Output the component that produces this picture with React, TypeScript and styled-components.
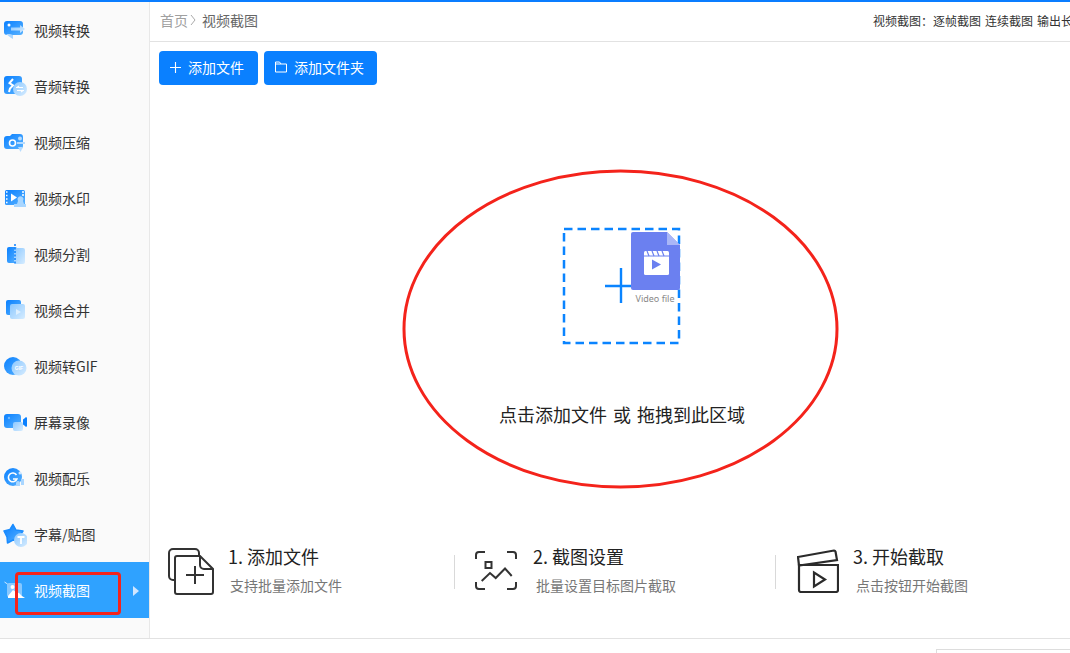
import React from "react";
import styled, { createGlobalStyle } from "styled-components";

const Global = createGlobalStyle`
  html, body { margin: 0; padding: 0; width: 1070px; height: 653px; overflow: hidden; background: #fff; }
  body { font-family: "Noto Sans CJK SC", "Liberation Sans", sans-serif; }
  * { box-sizing: border-box; }
`;

const Page = styled.div`
  position: relative;
  width: 1094px;
  height: 653px;
  display: flex;
  flex-direction: column;
  border-top: 2px solid #0a7dff;
`;
const Body = styled.div`
  display: flex;
  height: 637px;
  border-bottom: 1px solid #e2e2e2;
`;
const Sidebar = styled.nav`
  width: 150px;
  flex: none;
  background: #fafafa;
  border-right: 1px solid #e8e8e8;
`;
const NavItem = styled.div<{ $active?: boolean }>`
  height: 56px;
  padding-top: 2px;
  width: 149px;
  display: flex;
  align-items: center;
  gap: 7px;
  padding-left: 3px;
  font-size: 14px;
  color: ${p => (p.$active ? "#fff" : "#333")};
  background: ${p => (p.$active ? "#2fa2ff" : "transparent")};
`;
const NavLabel = styled.span`
  margin-bottom: 2px;
`;
const NavArrow = styled.span`
  margin-left: auto;
  margin-right: 10px;
  width: 0;
  height: 0;
  border-left: 6px solid #cfe6ff;
  border-top: 5px solid transparent;
  border-bottom: 5px solid transparent;
`;
const Main = styled.main`
  flex: 1;
  display: flex;
  flex-direction: column;
  min-width: 0;
`;
const Header = styled.header`
  height: 40px;
  flex: none;
  border-bottom: 1px solid #e2e2e2;
  display: flex;
  align-items: center;
  justify-content: space-between;
  padding: 0 9px 3px 10px;
`;
const Crumbs = styled.div`
  display: flex;
  align-items: center;
  font-size: 14px;
  color: #666;
`;
const CrumbHome = styled.span`
  color: #a0a0a0;
`;
const Chevron = styled.svg`
  width: 6px;
  height: 12px;
  margin: 0 6px 0 2px;
`;
const Links = styled.div`
  font-size: 12px;
  color: #333;
  white-space: nowrap;
  word-spacing: 1.3px;
`;
const Toolbar = styled.div`
  flex: none;
  display: flex;
  gap: 6px;
  padding: 9px 0 0 9px;
`;
const Button = styled.button<{ $w: number }>`
  width: ${p => p.$w}px;
  height: 34px;
  border: 0;
  border-radius: 4px;
  background: #0a80ff;
  color: #fff;
  font: inherit;
  font-size: 14px;
  display: flex;
  align-items: center;
  gap: 7px;
  padding: 0 0 2px 11px;
`;
const DropArea = styled.section`
  flex: 1;
  display: flex;
  flex-direction: column;
  align-items: center;
  padding-top: 142px;
`;
const DropGraphic = styled.svg`
  width: 120px;
  height: 118px;
  display: block;
`;
const DropText = styled.div`
  margin-top: 56px;
  font-size: 18px;
  line-height: 26px;
  color: #222;
  word-spacing: 2px;
`;
const Steps = styled.section`
  flex: none;
  height: 93px;
  display: flex;
  padding-left: 18px;
`;
const Step = styled.div<{ $w: number; $gap: number; $pad?: number }>`
  width: ${p => p.$w}px;
  padding-left: ${p => p.$pad ?? 0}px;
  display: flex;
  align-items: flex-start;
  gap: ${p => p.$gap}px;
`;
const StepText = styled.div<{ $indent: number }>`
  display: flex;
  flex-direction: column;
  > span:last-child { margin-left: ${p => p.$indent}px; }
`;
const StepTitle = styled.span`
  margin-top: -1px;
  font-size: 18px;
  line-height: 24px;
  color: #222;
`;
const StepSub = styled.span`
  margin-top: 7px;
  font-size: 14px;
  line-height: 20px;
  color: #777;
`;
const StepIcon = styled.svg`
  flex: none;
  margin-top: 3px;
`;
const Divider = styled.div`
  flex: none;
  width: 1px;
  height: 34px;
  margin-top: 10px;
  background: #d9d9d9;
`;
const Footer = styled.footer`
  flex: 1;
  display: flex;
  justify-content: flex-end;
  align-items: flex-end;
`;
const FooterBox = styled.div`
  width: 158px;
  height: 4px;
  border: 1px solid #ddd;
  border-bottom: 0;
`;
const EllipseMark = styled.svg`
  position: absolute;
  left: 402px;
  top: 167px;
  width: 437px;
  height: 320px;
`;
const BoxMark = styled.div`
  position: absolute;
  left: 15px;
  top: 570px;
  width: 106px;
  height: 43px;
  border: 3px solid #f4231b;
  border-radius: 4px;
`;
const NavSvg = styled.svg`
  flex: none;
  width: 24px;
  height: 24px;
`;

const D = "url(#navDark)";
const L = "url(#navLight)";

const navIcons: React.ReactNode[] = [
  <>
    <rect x="1" y="2" width="19" height="14" rx="3" fill={D} />
    <path d="M10 16v4l-2.500-1.500L3 15h4z" fill="#a9d6ff" />
    <circle cx="6" cy="6" r="1.500" fill="#fff" />
    <path d="M8 8.500h9V6l5 4-5 4v-2.500H8z" fill={L} />
  </>,
  <>
    <rect x="1" y="1" width="18" height="18" rx="3" fill={D} />
    <path d="M10 4L6.500 8l3.500 2.500-3 3-1 3.500" stroke="#fff" strokeWidth="2" fill="none" />
    <circle cx="17" cy="14" r="7" fill={L} />
    <path d="M13 12.500h7M14 12.500l2-1.500M21 15.500h-7M20 15.500l-2 1.500" stroke="#fff" strokeWidth="1.100" fill="none" />
  </>,
  <>
    <path d="M1 8a3 3 0 0 1 3-3h3l2-2h8a3 3 0 0 1 3 3v9a3 3 0 0 1-3 3H4a3 3 0 0 1-3-3z" fill={D} />
    <circle cx="9.500" cy="12" r="3" fill="none" stroke="#fff" strokeWidth="1.600" />
    <path d="M14 12h8" stroke="#b5dbff" strokeWidth="2" />
    <path d="M15 16h5l-2.500 5z" fill="#b5dbff" />
    <circle cx="17" cy="7.500" r="2" fill="#b5dbff" />
  </>,
  <>
    <rect x="2" y="3" width="20" height="15" rx="1.500" fill={D} />
    <path d="M3 5h1.500M3 8.500h1.500M3 12h1.500M3 15.500h1.500M19 5h2M19 8h2" stroke="#fff" strokeWidth="1.400" />
    <path d="M8 6.500l6 4-6 4z" fill="#fff" />
    <path d="M15 14a3 3 0 1 1 5 0l1 3h2v3H11v-3h3z" fill="#a9d6ff" />
  </>,
  <>
    <rect x="4" y="4" width="10" height="16" rx="2" fill={D} />
    <rect x="11" y="5" width="11" height="16" rx="2" fill={L} />
    <path d="M12 1v21" stroke="#0a80ff" strokeWidth="1.500" strokeDasharray="2 1.500" />
  </>,
  <>
    <rect x="3" y="1" width="15" height="15" rx="2" fill={D} />
    <rect x="7" y="5" width="15" height="15" rx="2" fill={L} />
    <path d="M13 10l5 3-5 3z" fill="#dff0ff" />
  </>,
  <>
    <circle cx="10" cy="11" r="9" fill={D} />
    <circle cx="16" cy="13" r="7.500" fill={L} />
    <text x="16" y="15" fontSize="5" fontWeight="700" fill="#fff" textAnchor="middle" fontFamily="Liberation Sans">GIF</text>
  </>,
  <>
    <rect x="1" y="3" width="17" height="14" rx="3" fill={D} />
    <circle cx="6" cy="7" r="1.200" fill="#6db8ff" />
    <rect x="10" y="11" width="10" height="9" rx="2" fill={L} />
    <path d="M20 8.500l2-1.500a1 1 0 0 1 2 .5v7a1 1 0 0 1-2 .5l-2-1.500z" fill="#0a80ff" />
  </>,
  <>
    <circle cx="10" cy="10" r="9" fill={D} />
    <path d="M13.500 8a4.400 4.400 0 1 0 .4 4H10" fill="none" stroke="#fff" strokeWidth="1.600" />
    <circle cx="17" cy="6" r="1.500" fill="#cfe7ff" />
    <path d="M13 16a2 2 0 0 1 4 0v3h-4zM18 12h3v6h-3z" fill="#a9d6ff" />
  </>,
  <>
    <path d="M10 1.500l3 5.500 7 1-3.500 5 1 5.500-7.500-1.500-5.500 3-.5-6L1 8l6-1.500z" fill={D} stroke="#1a8cff" strokeWidth="1.500" strokeLinejoin="round" />
    <circle cx="18" cy="17" r="7" fill={L} />
    <path d="M14.500 14h7M18 14v7" stroke="#fff" strokeWidth="1.800" />
  </>,
  <>
    <rect x="4" y="4" width="15" height="14" rx="2" fill="#cfe8ff" fillOpacity=".55" />
    <path d="M1.500 3l3 2" stroke="#cfe8ff" strokeWidth="1" />
    <circle cx="9.500" cy="8" r="2" fill="#fff" />
    <path d="M5 17l5-6 3 2 3 1 3 3 3 2H5z" fill="#fff" />
  </>,
];

const navLabels = ["视频转换", "音频转换", "视频压缩", "视频水印", "视频分割", "视频合并", "视频转GIF", "屏幕录像", "视频配乐", "字幕/贴图", "视频截图"];

function NavIcon({ index }: { index: number }) {
  return (
    <NavSvg viewBox="0 0 24 24">
      <defs>
        <linearGradient id="navDark" x1="0" y1="0" x2="1" y2="1">
          <stop offset="0" stopColor="#0a80ff" />
          <stop offset="1" stopColor="#58b2ff" />
        </linearGradient>
        <linearGradient id="navLight" x1="0" y1="0" x2="1" y2="1">
          <stop offset="0" stopColor="#8cc8ff" />
          <stop offset="1" stopColor="#d6ecff" />
        </linearGradient>
      </defs>
      {navIcons[index]}
    </NavSvg>
  );
}

export default function App() {
  return (
    <>
      <Global />
      <Page>
        <Body>
          <Sidebar>
            {navLabels.map((label, i) => (
              <NavItem key={label} $active={i === 10}>
                <NavIcon index={i} />
                <NavLabel>{label}</NavLabel>
                {i === 10 && <NavArrow />}
              </NavItem>
            ))}
          </Sidebar>
          <Main>
            <Header>
              <Crumbs>
                <CrumbHome>首页</CrumbHome>
                <Chevron viewBox="0 0 6 12"><path d="M1 1l4 5-4 5" fill="none" stroke="#aaa" /></Chevron>
                <span>视频截图</span>
              </Crumbs>
              <Links>视频截图：逐帧截图 连续截图 输出长图</Links>
            </Header>
            <Toolbar>
              <Button $w={99}>
                <svg width="11" height="11" viewBox="0 0 11 11"><path d="M5.500 0v11M0 5.500h11" stroke="#fff" strokeWidth="1.100" /></svg>
                添加文件
              </Button>
              <Button $w={113}>
                <svg width="12" height="12" viewBox="0 0 12 12"><path d="M.5 1h4L6 3h5.500v8H.5zM.5 3H6" fill="none" stroke="#fff" /></svg>
                添加文件夹
              </Button>
            </Toolbar>
            <DropArea>
              <DropGraphic viewBox="0 0 120 118">
                <rect x="2" y="2" width="115" height="114" fill="none" stroke="#0a84ff" strokeWidth="2.500" strokeDasharray="8.500 5" />
                <path d="M43 59h28M59 41v35" stroke="#0a84ff" strokeWidth="2.400" />
                <g transform="translate(-2 0)">
                  <path d="M71 7a2 2 0 0 1 2-2h34l13 13v43a2 2 0 0 1-2 2H73a2 2 0 0 1-2-2z" fill="#6b80f0" />
                  <path d="M107 5l13 13h-13z" fill="#a9b6f7" />
                  <rect x="84" y="24" width="25" height="24" rx="1.500" fill="#fff" />
                  <path d="M84 29h25" stroke="#6b80f0" strokeWidth="1" />
                  <path d="M87 24l2 5M92 24l2 5M97 24l2 5M102 24l2 5" stroke="#6b80f0" strokeWidth="1.200" />
                  <path d="M92 32.500l9 5-9 5z" fill="#6b80f0" />
                  <text x="95" y="75" fontSize="9" fill="#888" textAnchor="middle" fontFamily="Noto Sans">Video file</text>
                </g>
              </DropGraphic>
              <DropText>点击添加文件 或 拖拽到此区域</DropText>
            </DropArea>
            <Steps>
              <Step $w={286} $gap={14}>
                <StepIcon width="46" height="47" viewBox="0 0 46 47" fill="none" stroke="#333" strokeWidth="2">
                  <path d="M7 32H5a4 4 0 0 1-4-4V5a4 4 0 0 1 4-4h22a4 4 0 0 1 4 4v2" />
                  <path d="M9 8h23l13 13v23a2 2 0 0 1-2 2H9a2 2 0 0 1-2-2V10a2 2 0 0 1 2-2z" />
                  <path d="M32 8v9a4 4 0 0 0 4 4h9" />
                  <path d="M27 18v18M18 27h18" />
                </StepIcon>
                <StepText $indent={2}>
                  <StepTitle>1. 添加文件</StepTitle>
                  <StepSub>支持批量添加文件</StepSub>
                </StepText>
              </Step>
              <Divider />
              <Step $w={320} $gap={16} $pad={20}>
                <StepIcon width="42" height="42" viewBox="0 0 42 42" fill="none" stroke="#333" strokeWidth="2">
                  <path d="M1 11V7a3 3 0 0 1 3-3h6M32 4h6a3 3 0 0 1 3 3v4M41 34v4a3 3 0 0 1-3 3h-6M10 41H4a3 3 0 0 1-3-3v-4" />
                  <rect x="10.500" y="14" width="6" height="6" />
                  <path d="M6.700 33l8.300-8 5.700 5 9.300-9.500 6.700 7.500" />
                </StepIcon>
                <StepText $indent={3}>
                  <StepTitle>2. 截图设置</StepTitle>
                  <StepSub>批量设置目标图片截取</StepSub>
                </StepText>
              </Step>
              <Divider />
              <Step $w={300} $gap={14} $pad={21}>
                <StepIcon width="42" height="45" viewBox="0 0 42 45" fill="none" stroke="#2b2b2b" strokeWidth="2.200">
                  <path d="M1 9l36-6.500a1.500 1.500 0 0 1 1.500 1L40 12 2 17.500 1 9z" />
                  <path d="M2 17h39v25a2 2 0 0 1-2 2H4a2 2 0 0 1-2-2z" />
                  <path d="M17 24.500v14l11-7z" />
                </StepIcon>
                <StepText $indent={3}>
                  <StepTitle>3. 开始截取</StepTitle>
                  <StepSub>点击按钮开始截图</StepSub>
                </StepText>
              </Step>
            </Steps>
          </Main>
        </Body>
        <Footer><FooterBox /></Footer>
        <EllipseMark viewBox="0 0 437 320">
          <ellipse cx="218.500" cy="160" rx="216.500" ry="158" fill="none" stroke="#f4231b" strokeWidth="3" />
        </EllipseMark>
        <BoxMark />
      </Page>
    </>
  );
}
